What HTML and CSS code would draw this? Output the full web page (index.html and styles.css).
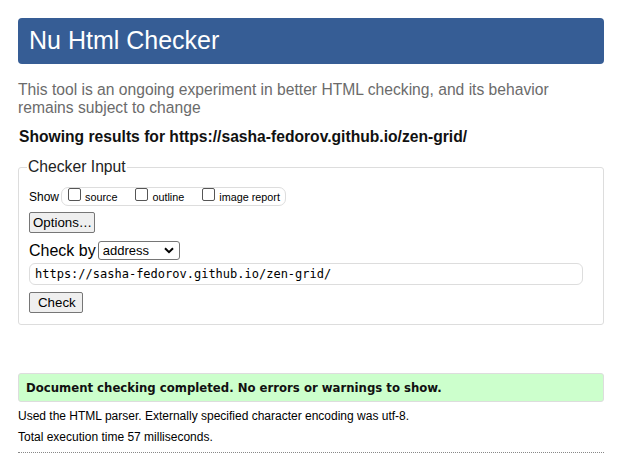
FILE: index.html
```html
<!DOCTYPE html>
<html lang="en">
<head>
<meta charset="utf-8">
<title>Nu Html Checker</title>
<link rel="stylesheet" href="styles.css">
</head>
<body>
<h1 class="title">Nu Html Checker</h1>
<p class="intro">This tool is an ongoing experiment in better HTML checking, and its behavior remains subject to change</p>
<p class="showing">Showing results for https://sasha-fedorov.github.io/zen-grid/</p>
<fieldset class="input-box">
  <legend class="legend">Checker Input</legend>
  <div class="show-row">
    <span class="show-label">Show</span>
    <span class="show-group">
      <label class="opt"><span class="cb"></span>source</label>
      <label class="opt"><span class="cb"></span>outline</label>
      <label class="opt"><span class="cb"></span>image report</label>
    </span>
  </div>
  <div class="row"><span class="btn">Options…</span></div>
  <div class="checkby">
    <span class="checkby-label">Check by</span>
    <span class="select">address<svg class="chev" width="10" height="7" viewBox="0 0 10 7"><path d="M1 1.2 L5 5.2 L9 1.2" fill="none" stroke="#000" stroke-width="2"/></svg></span>
  </div>
  <div class="url">https://sasha-fedorov.github.io/zen-grid/</div>
  <div class="row row-check"><span class="btn btn-wide">Check</span></div>
</fieldset>
<div class="success">Document checking completed. No errors or warnings to show.</div>
<p class="detail">Used the HTML parser. Externally specified character encoding was utf-8.</p>
<p class="detail">Total execution time 57 milliseconds.</p>
<div class="rule"></div>
</body>
</html>
```
FILE: styles.css
```css
html, body {
  background: #fff;
}
body {
  margin: 0;
  padding: 18px 19px 0 18px;
  font-family: "Liberation Sans", Arial, sans-serif;
  color: #000;
}
.title {
  margin: 0;
  height: 46px;
  box-sizing: border-box;
  padding: 8px 0 0 11px;
  background: #365d95;
  border-radius: 4px;
  color: #fff;
  font-weight: normal;
  font-size: 25px;
  line-height: 29px;
}
.intro {
  margin: 17px 0 0 0;
  color: #6b6b6b;
  font-size: 15.65px;
  line-height: 18px;
}
.showing {
  margin: 11px 0 0 1px;
  font-weight: bold;
  font-size: 15.65px;
  line-height: 18px;
  color: #111;
}
.input-box {
  margin: 12px 0 0 0;
  padding: 11px 10px 11px 10px;
  border: 1px solid #ddd;
  border-radius: 3px;
}
.legend {
  margin-left: -2px;
  padding: 0 1px;
  font-size: 15.7px;
  color: #222;
}
.show-row {
  display: flex;
  align-items: center;
  font-size: 12px;
  height: 19px;
}
.show-label {
  margin-right: 2px;
}
.show-group {
  display: inline-flex;
  align-items: center;
  box-sizing: border-box;
  border: 1px solid #ddd;
  border-radius: 7px;
  height: 19px;
  padding: 0 5px 0 6px;
  font-size: 10.8px;
}
.opt {
  display: inline-flex;
  align-items: center;
  margin-right: 18px;
}
.opt:last-child {
  margin-right: 0;
}
.cb {
  width: 11px;
  height: 11px;
  border: 1px solid #555;
  border-radius: 2px;
  margin-right: 4px;
  position: relative;
  top: -2px;
}
.row {
  display: flex;
  margin-top: 6px;
}
.btn {
  display: inline-block;
  box-sizing: border-box;
  padding: 1px 2px 0 3px;
  height: 21px;
  line-height: 18px;
  font-size: 13.3px;
  background: #efefef;
  border: 1px solid #767676;
  border-radius: 2px;
}
.btn-wide {
  padding: 1px 6px 0 8px;
}
.checkby {
  display: flex;
  align-items: center;
  margin-top: 8px;
}
.checkby-label {
  font-size: 16px;
  line-height: 19px;
  margin-right: 2px;
}
.select {
  display: inline-flex;
  align-items: center;
  justify-content: space-between;
  box-sizing: border-box;
  width: 82px;
  height: 19px;
  padding: 0 5px 0 4px;
  font-size: 13px;
  border: 1px solid #767676;
  border-radius: 3px;
}
.url {
  margin-top: 3px;
  box-sizing: border-box;
  width: 554px;
  height: 22px;
  padding: 3px 5px 0 5px;
  font-family: "DejaVu Sans Mono", monospace;
  font-size: 12px;
  line-height: 15px;
  border: 1px solid #ddd;
  border-radius: 6px;
}
.row-check {
  margin-top: 7px;
}
.success {
  margin-top: 48px;
  box-sizing: border-box;
  height: 29px;
  padding: 5px 0 0 7px;
  background: #ccffcc;
  border: 1px solid #ddd;
  border-radius: 3px;
  font-family: "DejaVu Sans Condensed", "DejaVu Sans", Verdana, sans-serif;
  font-weight: bold;
  font-size: 13px;
  line-height: 17px;
  color: #111;
}
.detail {
  margin: 7px 0 0 0;
  font-size: 12px;
  line-height: 15px;
}
.detail + .detail {
  margin-top: 6px;
}
.rule {
  margin-top: 7px;
  border-top: 1px dotted #888;
}
```
